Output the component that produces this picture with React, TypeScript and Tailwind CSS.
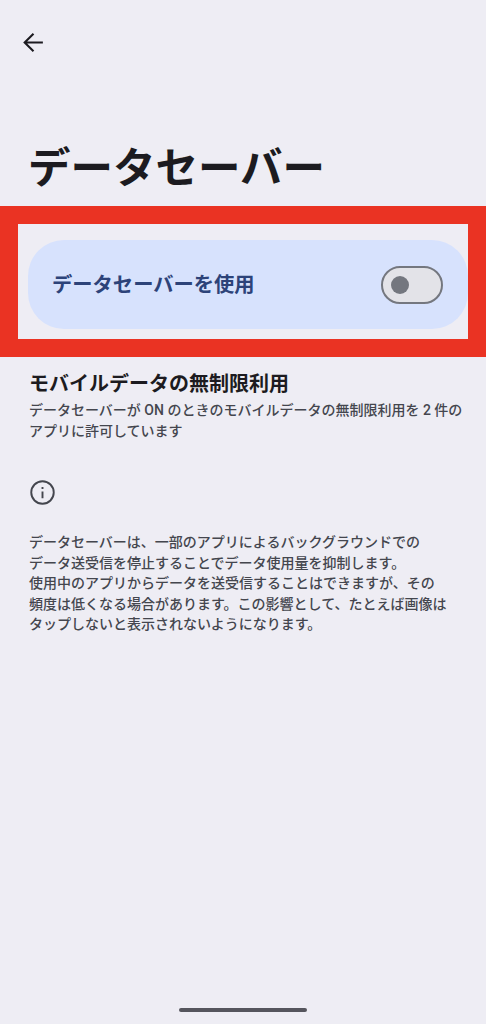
const jp = "font-['Roboto','Noto_Sans_CJK_JP',sans-serif]";

export default function App() {
  return (
    <div className={`${jp} w-[486px] h-[1024px] bg-[#eeedf4] flex flex-col overflow-hidden text-[#1c1b20]`}>
      <div className="h-[85px] pl-[21px] pt-[30px]">
        <svg width="25" height="25" viewBox="0 0 24 24" fill="none" stroke="#1c1b20" strokeWidth="2">
          <path d="M21 12H4M12 3.500L3.500 12l8.500 8.500" />
        </svg>
      </div>
      <h1 className="h-[121px] pl-[28px] pt-[56px] text-[42.5px] leading-[56px] font-bold">データセーバー</h1>
      <div className="h-[151px] border-[18px] border-[#ea3323] flex items-center bg-[#eeedf4] pt-[6px]">
        <div className="ml-[10px] w-[440px] h-[89px] rounded-[36px] bg-[#d7e2fd] flex items-center justify-between pl-[24px] pr-[25px]">
          <span className="pt-[1px] text-[20.3px] font-bold text-[#2d4379]">データセーバーを使用</span>
          <div className="w-[62px] h-[38px] rounded-full border-2 border-[#74777f] bg-[#e3e3e8] flex items-center pl-[8px]">
            <div className="w-[18px] h-[18px] rounded-full bg-[#74777f]" />
          </div>
        </div>
      </div>
      <div className="pl-[29px] pt-[13px] pr-[20px]">
        <h2 className="text-[20px] leading-[28px] font-bold">モバイルデータの無制限利用</h2>
        <p className="text-[14px] leading-[21px] mt-[2px] font-medium text-[#44464e]">データセーバーが ON のときのモバイルデータの無制限利用を 2 件のアプリに許可しています</p>
      </div>
      <div className="pl-[29px] mt-[37px]">
        <svg width="27" height="27" viewBox="0 0 24 24" fill="none" stroke="#44464e" strokeWidth="1.7">
          <circle cx="12" cy="12" r="10" />
          <path d="M12 11v6M12 7v1.800" />
        </svg>
      </div>
      <p className="pl-[29px] pr-[20px] mt-[26px] text-[14px] leading-[20.6px] font-medium text-[#44464e]">
        データセーバーは、一部のアプリによるバックグラウンドでの<br />
        データ送受信を停止することでデータ使用量を抑制します。<br />
        使用中のアプリからデータを送受信することはできますが、その<br />
        頻度は低くなる場合があります。この影響として、たとえば画像は<br />
        タップしないと表示されないようになります。
      </p>
      <div className="mt-auto mb-[12px] mx-auto w-[128px] h-[4px] rounded-full bg-[#55555d]" />
    </div>
  );
}
